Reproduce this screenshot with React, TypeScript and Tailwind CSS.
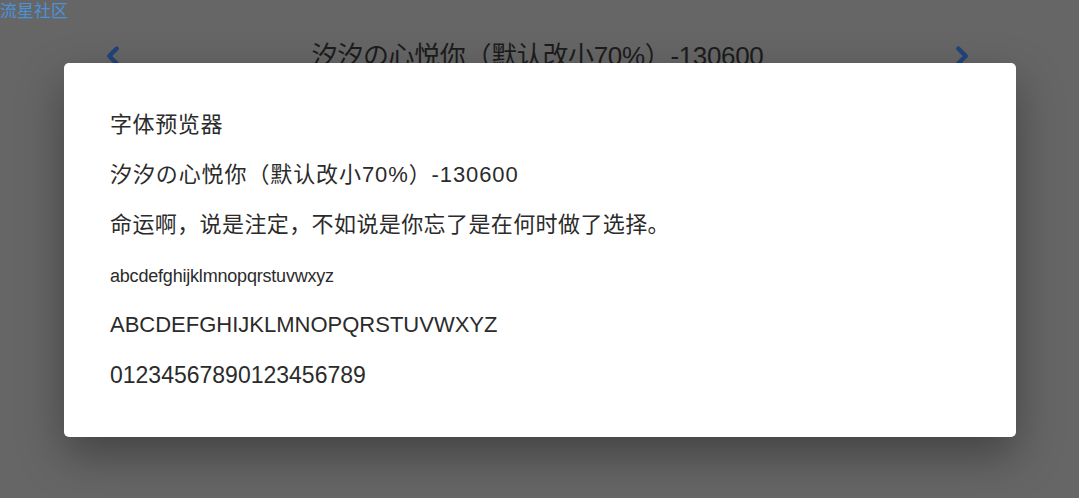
import { ChevronLeft, ChevronRight } from 'lucide-react'

const FONT = "[font-family:'Liberation_Sans','Noto_Sans_CJK_SC',sans-serif]"

export default function App() {
  return (
    <div className={`relative w-[1079px] h-[498px] overflow-hidden bg-[#666666] ${FONT}`}>
      {/* site name */}
      <div className="absolute left-0 top-0 text-[17px] leading-[19px] text-[#4b92da] [font-family:'Noto_Sans_CJK_SC',sans-serif]">
        流星社区
      </div>

      {/* page header behind the dialog */}
      <div className="flex items-center justify-between pl-[98px] pr-[102px] pt-[39px]">
        <ChevronLeft size={30} strokeWidth={3.5} className="text-[#22437c]" />
        <div className="text-[26px] leading-[34px] text-[#1c1c1c] tracking-[-0.35px]">
          汐汐の心悦你（默认改小70%）-130600
        </div>
        <ChevronRight size={30} strokeWidth={3.5} className="text-[#22437c]" />
      </div>

      {/* dialog */}
      <div className="absolute left-[64px] top-[63px] w-[952px] h-[374px] rounded-[5px] bg-white shadow-[0_18px_45px_rgba(0,0,0,0.35)] pl-[46px] pt-[37px] text-[#2b2b2b]">
        <div className="flex flex-col">
          <div className="h-[50px] text-[22px] leading-[50px] tracking-[0.6px]">字体预览器</div>
          <div className="h-[50px] text-[22px] leading-[50px] tracking-[0.9px]">汐汐の心悦你（默认改小70%）-130600</div>
          <div className="h-[50px] text-[22px] leading-[50px] tracking-[0.4px]">
            命运啊，说是注定，不如说是你忘了是在何时做了选择。
          </div>
          <div className="h-[50px] text-[18px] leading-[52px] tracking-[-0.2px]">abcdefghijklmnopqrstuvwxyz</div>
          <div className="h-[50px] text-[22px] leading-[50px]">ABCDEFGHIJKLMNOPQRSTUVWXYZ</div>
          <div className="h-[50px] text-[23px] leading-[50px]">01234567890123456789</div>
        </div>
      </div>
    </div>
  )
}
